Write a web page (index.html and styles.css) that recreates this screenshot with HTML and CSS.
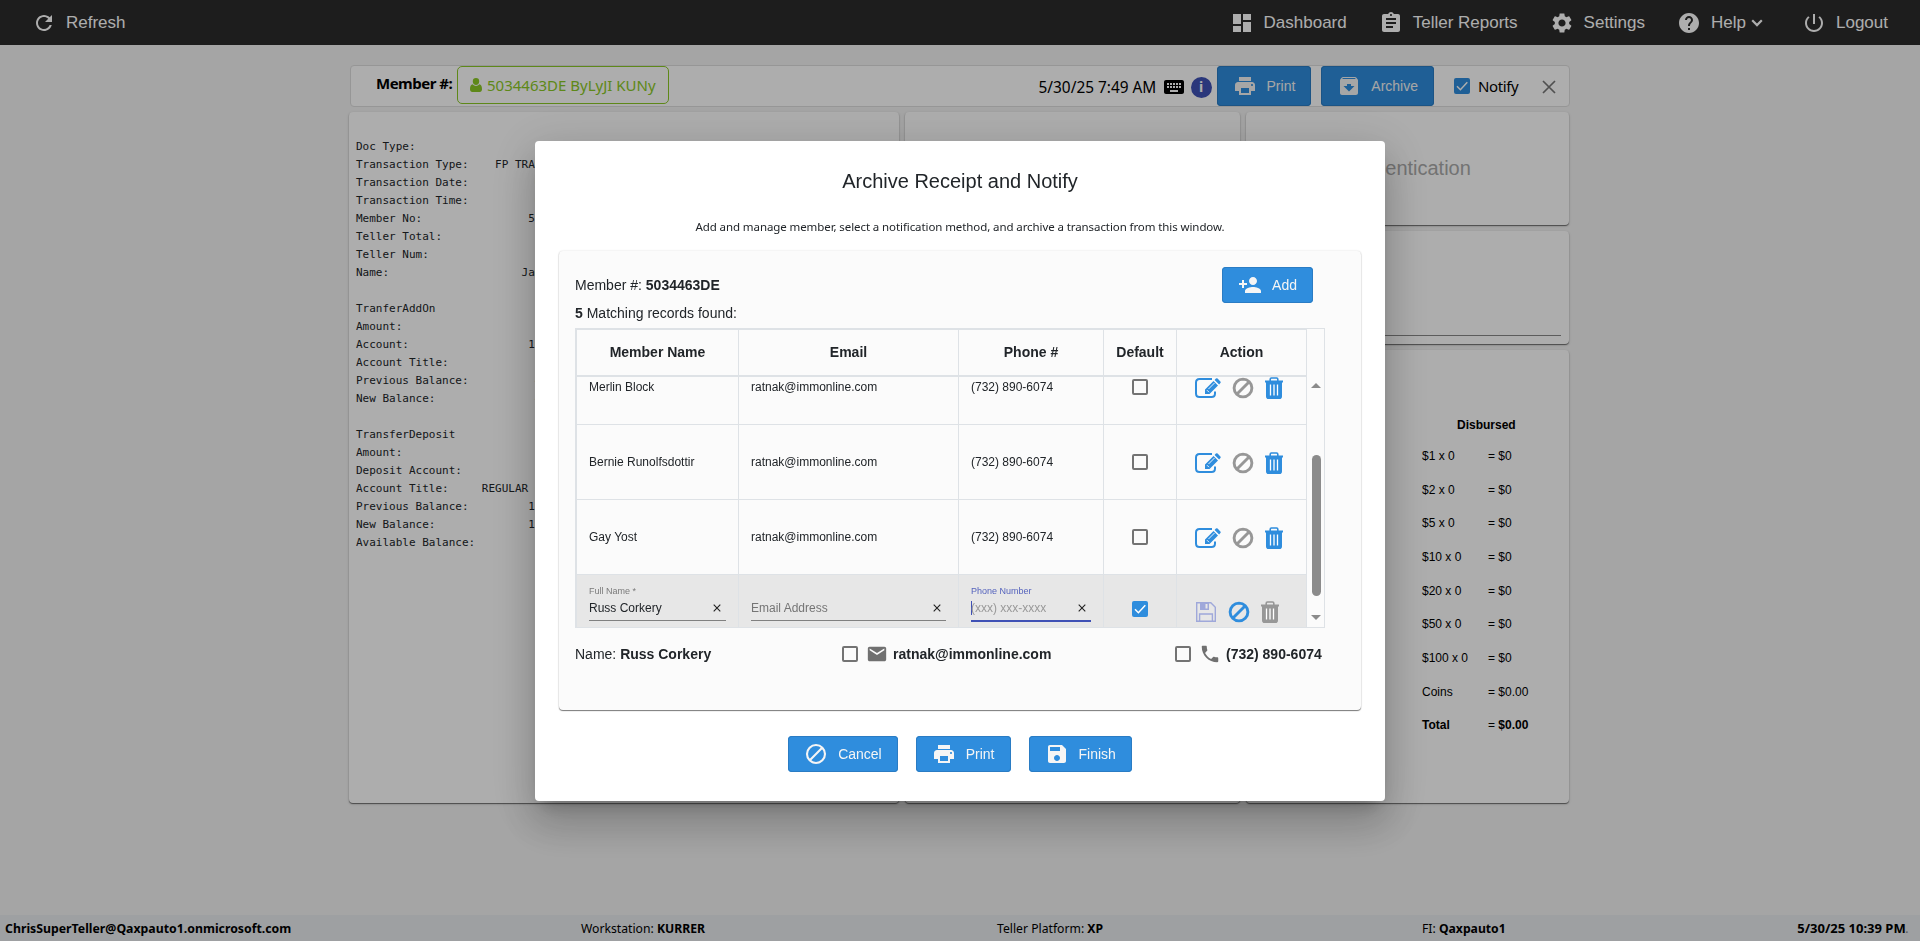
FILE: index.html
```html
<!DOCTYPE html>
<html>

<head>
    <meta charset="utf-8">
    <title>Teller Receipt</title>
    <link rel="stylesheet" href="styles.css">
</head>

<body>
    <!-- icon set -->
    <svg class="sprite" width="0" height="0">
        <symbol id="refresh" viewBox="0 0 24 24"><path d="M17.65 6.35C16.2 4.9 14.21 4 12 4c-4.42 0-7.99 3.58-7.99 8s3.57 8 7.99 8c3.73 0 6.84-2.55 7.73-6h-2.08c-.82 2.33-3.04 4-5.65 4-3.31 0-6-2.69-6-6s2.69-6 6-6c1.66 0 3.14.69 4.22 1.78L13 11h7V4l-2.35 2.35z"/></symbol>
        <symbol id="dashboard" viewBox="0 0 24 24"><path d="M3 13h8V3H3v10zm0 8h8v-6H3v6zm10 0h8V11h-8v10zm0-18v6h8V3h-8z"/></symbol>
        <symbol id="reports" viewBox="0 0 24 24"><path d="M19 3h-4.18C14.4 1.84 13.3 1 12 1c-1.3 0-2.4.84-2.82 2H5c-1.1 0-2 .9-2 2v14c0 1.1.9 2 2 2h14c1.1 0 2-.9 2-2V5c0-1.1-.9-2-2-2zm-7 0c.55 0 1 .45 1 1s-.45 1-1 1-1-.45-1-1 .45-1 1-1zm2 14H7v-2h7v2zm3-4H7v-2h10v2zm0-4H7V7h10v2z"/></symbol>
        <symbol id="settings" viewBox="0 0 24 24"><path d="M19.14 12.94c.04-.3.06-.61.06-.94 0-.32-.02-.64-.07-.94l2.03-1.58c.18-.14.23-.41.12-.61l-1.92-3.32c-.12-.22-.37-.29-.59-.22l-2.39.96c-.5-.38-1.03-.7-1.62-.94l-.36-2.54c-.04-.24-.24-.41-.48-.41h-3.84c-.24 0-.43.17-.47.41l-.36 2.54c-.59.24-1.13.57-1.62.94l-2.39-.96c-.22-.08-.47 0-.59.22L2.74 8.87c-.12.21-.08.47.12.61l2.03 1.58c-.05.3-.09.63-.09.94s.02.64.07.94l-2.03 1.58c-.18.14-.23.41-.12.61l1.92 3.32c.12.22.37.29.59.22l2.39-.96c.5.38 1.03.7 1.62.94l.36 2.54c.05.24.24.41.48.41h3.84c.24 0 .44-.17.47-.41l.36-2.54c.59-.24 1.13-.56 1.62-.94l2.39.96c.22.08.47 0 .59-.22l1.92-3.32c.12-.22.07-.47-.12-.61l-2.01-1.58zM12 15.6c-1.98 0-3.6-1.62-3.6-3.6s1.62-3.6 3.6-3.6 3.6 1.62 3.6 3.6-1.62 3.6-3.6 3.6z"/></symbol>
        <symbol id="help" viewBox="0 0 24 24"><path d="M12 2C6.48 2 2 6.48 2 12s4.48 10 10 10 10-4.48 10-10S17.52 2 12 2zm1 17h-2v-2h2v2zm2.07-7.75l-.9.92C13.45 12.9 13 13.5 13 15h-2v-.5c0-1.1.45-2.1 1.17-2.83l1.24-1.26c.37-.36.59-.86.59-1.41 0-1.1-.9-2-2-2s-2 .9-2 2H8c0-2.21 1.79-4 4-4s4 1.79 4 4c0 .88-.36 1.68-.93 2.25z"/></symbol>
        <symbol id="power" viewBox="0 0 24 24"><path d="M13 3h-2v10h2V3zm4.83 2.17l-1.42 1.42C17.99 7.86 19 9.81 19 12c0 3.87-3.13 7-7 7s-7-3.13-7-7c0-2.19 1.01-4.14 2.58-5.42L6.17 5.17C4.23 6.82 3 9.26 3 12c0 4.97 4.03 9 9 9s9-4.03 9-9c0-2.74-1.23-5.18-3.17-6.83z"/></symbol>
        <symbol id="print" viewBox="0 0 24 24"><path d="M19 8H5c-1.66 0-3 1.34-3 3v6h4v4h12v-4h4v-6c0-1.66-1.34-3-3-3zm-3 11H8v-5h8v5zm3-7c-.55 0-1-.45-1-1s.45-1 1-1 1 .45 1 1-.45 1-1 1zm-1-9H6v4h12V3z"/></symbol>
        <symbol id="archive" viewBox="0 0 24 24"><path d="M20.54 5.23l-1.39-1.68C18.88 3.21 18.47 3 18 3H6c-.47 0-.88.21-1.16.55L3.46 5.23C3.17 5.57 3 6.02 3 6.5V19c0 1.1.9 2 2 2h14c1.1 0 2-.9 2-2V6.5c0-.48-.17-.93-.46-1.27zM12 17.5L6.5 12H10v-2h4v2h3.5L12 17.5zM5.12 5l.81-1h12l.94 1H5.12z"/></symbol>
        <symbol id="keyboard" viewBox="0 0 24 24"><path d="M20 5H4c-1.1 0-1.99.9-1.99 2L2 17c0 1.1.9 2 2 2h16c1.1 0 2-.9 2-2V7c0-1.1-.9-2-2-2zm-9 3h2v2h-2V8zm0 3h2v2h-2v-2zM8 8h2v2H8V8zm0 3h2v2H8v-2zm-1 2H5v-2h2v2zm0-3H5V8h2v2zm9 7H8v-2h8v2zm0-4h-2v-2h2v2zm0-3h-2V8h2v2zm3 3h-2v-2h2v2zm0-3h-2V8h2v2z"/></symbol>
        <symbol id="addperson" viewBox="0 0 24 24"><path d="M15 12c2.21 0 4-1.79 4-4s-1.79-4-4-4-4 1.79-4 4 1.79 4 4 4zm-9-2V7H4v3H1v2h3v3h2v-3h3v-2H6zm9 4c-2.67 0-8 1.34-8 4v2h16v-2c0-2.66-5.33-4-8-4z"/></symbol>
        <symbol id="mail" viewBox="0 0 24 24"><path d="M20 4H4c-1.1 0-1.99.9-1.99 2L2 18c0 1.1.9 2 2 2h16c1.1 0 2-.9 2-2V6c0-1.1-.9-2-2-2zm0 4l-8 5-8-5V6l8 5 8-5v2z"/></symbol>
        <symbol id="phone" viewBox="0 0 24 24"><path d="M6.62 10.79c1.44 2.83 3.76 5.14 6.59 6.59l2.2-2.2c.27-.27.67-.36 1.02-.24 1.12.37 2.33.57 3.57.57.55 0 1 .45 1 1V20c0 .55-.45 1-1 1-9.39 0-17-7.61-17-17 0-.55.45-1 1-1h3.5c.55 0 1 .45 1 1 0 1.25.2 2.45.57 3.57.11.35.03.74-.25 1.02l-2.2 2.2z"/></symbol>
        <symbol id="save" viewBox="0 0 24 24"><path d="M17 3H5c-1.11 0-2 .9-2 2v14c0 1.1.89 2 2 2h14c1.1 0 2-.9 2-2V7l-4-4zm-5 16c-1.66 0-3-1.34-3-3s1.34-3 3-3 3 1.34 3 3-1.34 3-3 3zm3-10H5V5h10v4z"/></symbol>
        <symbol id="block" viewBox="0 0 24 24"><path d="M12 3a9 9 0 1 0 0 18 9 9 0 0 0 0-18zM18.2 5.8L5.8 18.2" fill="none" stroke="currentColor" stroke-width="2.1"/></symbol>
        <symbol id="user" viewBox="0 0 12 14"><path d="M6 0a3.2 3.4 0 0 1 3.2 3.5C9.200 5.500 7.800 7 6 7S2.800 5.500 2.800 3.500A3.200 3.400 0 0 1 6 0zM2.800 6.300C3.600 7.300 4.700 7.900 6 7.900s2.400-.6 3.200-1.600C11.200 6.600 12 8.600 12 11.300 12 12.900 11.100 14 9.700 14H2.300C.9 14 0 12.900 0 11.300 0 8.600.8 6.600 2.800 6.300z"/></symbol>
        <symbol id="ban" viewBox="0 0 22 22"><path d="M11 2.100a8.900 8.900 0 1 0 0 17.800 8.900 8.900 0 0 0 0-17.800zM17 5L5 17" fill="none" stroke="currentColor" stroke-width="2.900"/></symbol>
        <symbol id="edit" viewBox="0 0 28 22">
            <path d="M18 2H5.500Q2 2 2 5.500v11Q2 20 5.500 20h12q3.500 0 3.500-3.500V14.500" fill="none" stroke="currentColor" stroke-width="2"/>
            <path d="M11 12.500L19.500 4l4.500 4.500L15.500 17H11zM20.600 2.900l1.300-1.300q.8-.8 1.700 0l2.800 2.800q.8.8 0 1.600L25.100 7.400z"/>
            <path d="M13 13.200l2 2M14.500 12l6-6" fill="none" stroke="#fff" stroke-width=".9"/>
        </symbol>
        <symbol id="trash" viewBox="0 0 20 22">
            <path d="M6.200 4V2.200Q6.200 1 7.400 1h5.200q1.200 0 1.200 1.200V4" fill="none" stroke="currentColor" stroke-width="1.600"/>
            <path d="M1 3.600h18v2H1zM2 5h16v14.200Q18 22 15.500 22h-11Q2 22 2 19.200z"/>
            <path d="M6.500 7.500v11M10 7.500v11M13.500 7.500v11" fill="none" stroke="#fff" stroke-width="1.300"/>
        </symbol>
        <symbol id="floppy" viewBox="0 0 20 20">
            <path d="M.7.700h14.100l4.500 4.500v14.100H.7zM3.600 19v-7h12.800v7" fill="none" stroke="currentColor" stroke-width="1.400"/>
            <path d="M4 1h9v7H4zM9.500 2v4.500h2V2z" fill-rule="evenodd"/>
        </symbol>
        <symbol id="cross" viewBox="0 0 14 14"><path d="M1 1l12 12M13 1L1 13" fill="none" stroke="currentColor" stroke-width="1.700"/></symbol>
        <symbol id="clear" viewBox="0 0 8 8"><path d="M.7.700l6.600 6.600M7.300.700L.7 7.300" fill="none" stroke="currentColor" stroke-width="1.100"/></symbol>
        <symbol id="chevron" viewBox="0 0 12 8"><path d="M1.200 1.300L6 6.100l4.800-4.800" fill="none" stroke="currentColor" stroke-width="2.200"/></symbol>
        <symbol id="tick" viewBox="0 0 16 16"><path d="M3 8.300l3.400 3.400L13.300 4.300" fill="none" stroke="#fff" stroke-width="1.500"/></symbol>
    </svg>

    <div class="page">
        <div class="topbar">
            <div class="nav-item"><svg class="icon"><use href="#refresh"/></svg>Refresh</div>
            <div class="nav-right">
                <div class="nav-item"><svg class="icon"><use href="#dashboard"/></svg>Dashboard</div>
                <div class="nav-item"><svg class="icon"><use href="#reports"/></svg>Teller Reports</div>
                <div class="nav-item"><svg class="icon"><use href="#settings"/></svg>Settings</div>
                <div class="nav-item nav-help"><svg class="icon"><use href="#help"/></svg>Help<svg class="chevron"><use href="#chevron"/></svg></div>
                <div class="nav-item"><svg class="icon"><use href="#power"/></svg>Logout</div>
            </div>
        </div>

        <div class="member-bar">
            <b class="member-label">Member #:</b>
            <div class="member-btn"><svg class="user"><use href="#user"/></svg><span>5034463DE ByLyJI KUNy</span></div>
            <div class="member-tools">
                <span class="bar-date">5/30/25 7:49 AM</span>
                <svg class="icon keyboard"><use href="#keyboard"/></svg>
                <span class="info">i</span>
                <div class="btn bar-btn"><svg class="icon"><use href="#print"/></svg>Print</div>
                <div class="btn bar-btn"><svg class="icon"><use href="#archive"/></svg>Archive</div>
                <span class="check checked"><svg><use href="#tick"/></svg></span>
                <span class="notify">Notify</span>
                <svg class="close"><use href="#cross"/></svg>
            </div>
        </div>

        <div class="panels">
            <div class="card">
<pre class="receipt">Doc Type:
Transaction Type:    FP TRANSFER
Transaction Date:          05/30/25
Transaction Time:          07:49
Member No:                5034463DE
Teller Total:
Teller Num:
Name:                    James

TranferAddOn
Amount:
Account:                  10
Account Title:
Previous Balance:          4
New Balance:               4

TransferDeposit
Amount:
Deposit Account:
Account Title:     REGULAR CHECKING
Previous Balance:         1
New Balance:              1
Available Balance:</pre>
            </div>
            <div class="card"></div>
            <div class="side">
                <div class="card auth">Authentication</div>
                <div class="card sign"><div class="sign-line"></div></div>
                <div class="card cash">
                    <b class="cash-title">Disbursed</b>
                    <div class="cash-row"><span>$1 x 0</span><span>= $0</span></div>
                    <div class="cash-row"><span>$2 x 0</span><span>= $0</span></div>
                    <div class="cash-row"><span>$5 x 0</span><span>= $0</span></div>
                    <div class="cash-row"><span>$10 x 0</span><span>= $0</span></div>
                    <div class="cash-row"><span>$20 x 0</span><span>= $0</span></div>
                    <div class="cash-row"><span>$50 x 0</span><span>= $0</span></div>
                    <div class="cash-row"><span>$100 x 0</span><span>= $0</span></div>
                    <div class="cash-row"><span>Coins</span><span>= $0.00</span></div>
                    <div class="cash-row"><b>Total</b><span>= <b>$0.00</b></span></div>
                </div>
            </div>
        </div>

        <div class="footer">
            <b class="foot-user">ChrisSuperTeller@Qaxpauto1.onmicrosoft.com</b>
            <span>Workstation: <b>KURRER</b></span>
            <span>Teller Platform: <b>XP</b></span>
            <span>FI: <b>Qaxpauto1</b></span>
            <span class="foot-date"><b>5/30/25 10:39 PM</b><i>.</i></span>
        </div>
    </div>

    <div class="overlay">
        <div class="modal">
            <h2>Archive Receipt and Notify</h2>
            <p class="hint">Add and manage member, select a notification method, and archive a transaction from this window.</p>

            <div class="box">
                <div class="box-head">
                    <div class="lines">
                        <div>Member #: <b>5034463DE</b></div>
                        <div><b>5</b> Matching records found:</div>
                    </div>
                    <div class="btn"><svg class="icon"><use href="#addperson"/></svg>Add</div>
                </div>

                <div class="grid">
                    <div class="grid-table">
                        <div class="row head">
                            <div>Member Name</div>
                            <div>Email</div>
                            <div>Phone #</div>
                            <div>Default</div>
                            <div>Action</div>
                        </div>
                        <div class="rows">
                            <div class="rows-scrolled">
                                <div class="row">
                                    <div>Merlin Block</div>
                                    <div>ratnak@immonline.com</div>
                                    <div>(732) 890-6074</div>
                                    <div class="mid"><span class="check"></span></div>
                                    <div class="actions"><svg class="i-edit"><use href="#edit"/></svg><svg class="i-ban off"><use href="#ban"/></svg><svg class="i-trash"><use href="#trash"/></svg></div>
                                </div>
                                <div class="row">
                                    <div>Bernie Runolfsdottir</div>
                                    <div>ratnak@immonline.com</div>
                                    <div>(732) 890-6074</div>
                                    <div class="mid"><span class="check"></span></div>
                                    <div class="actions"><svg class="i-edit"><use href="#edit"/></svg><svg class="i-ban off"><use href="#ban"/></svg><svg class="i-trash"><use href="#trash"/></svg></div>
                                </div>
                                <div class="row">
                                    <div>Gay Yost</div>
                                    <div>ratnak@immonline.com</div>
                                    <div>(732) 890-6074</div>
                                    <div class="mid"><span class="check"></span></div>
                                    <div class="actions"><svg class="i-edit"><use href="#edit"/></svg><svg class="i-ban off"><use href="#ban"/></svg><svg class="i-trash"><use href="#trash"/></svg></div>
                                </div>
                                <div class="row editing">
                                    <div>
                                        <div class="field">
                                            <label>Full Name *</label>
                                            <div class="value">Russ Corkery<svg class="clear"><use href="#clear"/></svg></div>
                                        </div>
                                    </div>
                                    <div>
                                        <div class="field">
                                            <label></label>
                                            <div class="value empty">Email Address<svg class="clear"><use href="#clear"/></svg></div>
                                        </div>
                                    </div>
                                    <div>
                                        <div class="field focus">
                                            <label>Phone Number</label>
                                            <div class="value"><span class="caret"></span><span class="mask">(xxx) xxx-xxxx</span><svg class="clear"><use href="#clear"/></svg></div>
                                        </div>
                                    </div>
                                    <div class="mid"><span class="check checked"><svg><use href="#tick"/></svg></span></div>
                                    <div class="actions"><svg class="i-save"><use href="#floppy"/></svg><svg class="i-ban"><use href="#ban"/></svg><svg class="i-trash off"><use href="#trash"/></svg></div>
                                </div>
                            </div>
                        </div>
                    </div>
                    <div class="scrollbar">
                        <span class="arrow-up"></span>
                        <span class="thumb"></span>
                        <span class="arrow-down"></span>
                    </div>
                </div>

                <div class="contact">
                    <span class="contact-name">Name: <b>Russ Corkery</b></span>
                    <span class="contact-item mail"><span class="check"></span><svg><use href="#mail"/></svg><b>ratnak@immonline.com</b></span>
                    <span class="contact-item phone"><span class="check"></span><svg><use href="#phone"/></svg><b>(732) 890-6074</b></span>
                </div>
            </div>

            <div class="buttons">
                <div class="btn"><svg class="icon"><use href="#block"/></svg>Cancel</div>
                <div class="btn"><svg class="icon"><use href="#print"/></svg>Print</div>
                <div class="btn"><svg class="icon"><use href="#save"/></svg>Finish</div>
            </div>
        </div>
    </div>
</body>

</html>
```
FILE: styles.css
```css
* {
    box-sizing: border-box;
}
body {
    margin: 0;
    font-family: "Liberation Sans", Arial, sans-serif;
    color: #212529;
    overflow: hidden;
}
svg {
    fill: currentColor;
    display: block;
    flex: none;
}
.sprite {
    position: absolute;
}
.icon {
    width: 24px;
    height: 24px;
}
.page {
    width: 1920px;
    height: 941px;
    background: #f3f3f3;
    display: flex;
    flex-direction: column;
}

/* top bar */
.topbar {
    height: 45px;
    background: #2c2c2c;
    color: #fff;
    display: flex;
    justify-content: space-between;
    padding: 0 32px;
    font-size: 17px;
}
.nav-item {
    display: flex;
    align-items: center;
    gap: 10px;
}
.nav-right {
    display: flex;
    gap: 32px;
}
.nav-help {
    margin-right: 7px;
}
.chevron {
    width: 12px;
    height: 8px;
    margin-left: -5px;
}

/* member bar */
.member-bar {
    width: 1220px;
    height: 42px;
    margin: 20px 0 0 350px;
    border: 1px solid #ddd;
    border-radius: 4px;
    background: #fff;
    color: #000;
    display: flex;
    font-family: "Noto Sans", "Open Sans", sans-serif;
    font-size: 16px;
}
.member-label {
    width: 106px;
    padding: 6px 0 0 25px;
    line-height: 22px;
    white-space: nowrap;
    font-size: 15px;
    letter-spacing: -.5px;
}
.member-btn {
    width: 212px;
    height: 38px;
    border: 1px solid #8bc926;
    border-radius: 5px;
    color: #8bc926;
    display: flex;
    align-items: center;
    padding-left: 12px;
    gap: 5px;
    font-size: 15px;
    white-space: nowrap;
}
.user {
    width: 12px;
    height: 14px;
}
.member-tools {
    margin-left: auto;
    display: flex;
    align-items: center;
    white-space: nowrap;
}
.bar-date {
    width: 123px;
    padding-top: 2px;
    font-size: 15.4px;
}
.keyboard {
    margin: 2px 5px 0 0;
}
.info {
    width: 21px;
    height: 21px;
    border-radius: 50%;
    background: #3f51b5;
    color: #fff;
    font-weight: bold;
    font-size: 14px;
    line-height: 20px;
    text-align: center;
    margin: 2px 5px 0 0;
}
.btn {
    height: 36px;
    padding: 0 16px 0 16px;
    border-radius: 4px;
    box-shadow: inset 0 0 0 1px #2a7cc4;
    background: #2f8ddd;
    color: #f5f5f5;
    display: flex;
    align-items: center;
    gap: 10px;
    font-family: "Liberation Sans", Arial, sans-serif;
    font-size: 14px;
}
.bar-btn {
    height: 40px;
    margin-right: 10px;
}
.check {
    width: 16px;
    height: 16px;
    border: 2px solid #737373;
    border-radius: 2px;
    flex: none;
}
.checked {
    border: 0;
    background: #2f8ddd;
}
.checked svg {
    width: 16px;
    height: 16px;
}
.bar-btn + .check {
    margin: 0 8px 0 10px;
}
.notify {
    width: 64px;
    padding-bottom: 1px;
    font-size: 15px;
    letter-spacing: -.4px;
}
.close {
    width: 14px;
    height: 14px;
    color: #777;
    margin: 2px 13px 0 0;
}

/* background panels */
.panels {
    display: grid;
    grid-template-columns: 550px 335px 323px;
    gap: 6px;
    height: 691px;
    margin: 5px 0 0 349px;
}
.card {
    background: #fff;
    border-radius: 4px;
    box-shadow: 0 1px 1px rgba(0, 0, 0, .5), 0 1px 3px rgba(0, 0, 0, .15);
}
.receipt {
    margin: 26px 0 0 7px;
    font-family: "DejaVu Sans Mono", monospace;
    font-size: 11px;
    line-height: 18px;
}
.side {
    display: grid;
    grid-template-rows: 113px 113px 453px;
    gap: 6px;
}
.auth {
    font-size: 20px;
    color: #aaa;
    display: flex;
    align-items: center;
    justify-content: center;
}
.sign {
    display: flex;
    align-items: flex-end;
    padding: 8px;
}
.sign-line {
    flex: 1;
    border-bottom: 1px solid #888;
}
.cash {
    padding: 67px 0 0 176px;
    font-size: 12px;
    color: #000;
}
.cash-title {
    display: block;
    line-height: 17px;
    margin: 0 0 6px 35px;
}
.cash-row {
    display: grid;
    grid-template-columns: 66px 1fr;
    line-height: 33.65px;
}

/* status bar */
.footer {
    height: 26px;
    margin-top: auto;
    background: #e9ecef;
    color: #000;
    display: grid;
    grid-template-columns: 576px 416px 425px 1fr 1fr;
    padding: 0 11px 0 5px;
    line-height: 27px;
    font-family: "Noto Sans", "Open Sans", sans-serif;
    font-size: 12.2px;
    white-space: nowrap;
}
.foot-user {
    font-size: 12.3px;
}
.foot-date {
    font-size: 13px;
    text-align: right;
}
.foot-date i {
    color: #888;
}

/* dialog */
.overlay {
    position: fixed;
    top: 0;
    left: 0;
    width: 1920px;
    height: 941px;
    background: rgba(0, 0, 0, .32);
    display: flex;
    justify-content: center;
    align-items: flex-start;
    padding-top: 141px;
}
.modal {
    width: 850px;
    height: 660px;
    background: #fff;
    border-radius: 4px;
    padding: 24px;
    box-shadow: 0 11px 15px -7px rgba(0, 0, 0, .2), 0 24px 38px 3px rgba(0, 0, 0, .14), 0 9px 46px 8px rgba(0, 0, 0, .12);
}
.modal h2 {
    margin: 0;
    font-size: 20px;
    font-weight: normal;
    line-height: 32px;
    text-align: center;
}
.hint {
    margin: 21px 0 15px;
    font-family: "Noto Sans", "Open Sans", sans-serif;
    font-size: 11.5px;
    letter-spacing: -.09px;
    line-height: 18px;
    text-align: center;
}
.box {
    height: 459px;
    background: #fbfbfb;
    border-radius: 4px;
    box-shadow: 0 1px 1px rgba(0, 0, 0, .5), 0 0 2px rgba(0, 0, 0, .15);
    padding: 15px 16px;
    font-size: 14px;
}
.box-head {
    height: 62px;
    display: flex;
    justify-content: space-between;
    align-items: flex-start;
    padding: 1px 32px 0 0;
}
.lines {
    padding-top: 4px;
    line-height: 28px;
}
.grid {
    width: 750px;
    height: 300px;
    border: 1px solid #dee2e6;
    display: flex;
    justify-content: space-between;
}
.grid-table {
    width: 731px;
    border: solid #dee2e6;
    border-width: 1px 0 0 1px;
}
.row {
    display: grid;
    grid-template-columns: 162px 220px 145px 73px 130px;
    height: 75px;
    font-size: 12px;
}
.row > div {
    border-right: 1px solid #dee2e6;
    border-bottom: 1px solid #dee2e6;
    padding-left: 12px;
    display: flex;
    align-items: center;
}
.head {
    height: 47px;
}
.row.head > div {
    border-bottom-width: 2px;
    padding: 0 0 2px;
    justify-content: center;
    font-size: 14px;
    font-weight: bold;
}
.rows {
    height: 250px;
    overflow: hidden;
}
.rows-scrolled {
    margin-top: -27px;
}
.row > .mid {
    padding: 0;
    justify-content: center;
}
.row > .actions {
    padding: 1px 0 0 17px;
    color: #2f8ddd;
}
.i-edit {
    width: 28px;
    height: 22px;
    margin-right: 10px;
}
.i-ban {
    width: 22px;
    height: 22px;
    margin-right: 10px;
}
.i-trash {
    width: 20px;
    height: 22px;
}
.i-save {
    width: 20px;
    height: 20px;
    color: #9fa8da;
    margin: 1px 12px 0 2px;
}
.off {
    color: #979797;
}
.editing {
    background: #e7e7e7;
}
.editing > div {
    align-items: flex-start;
}
.row.editing > .mid {
    padding-top: 26px;
}
.row.editing > .actions {
    padding-top: 26px;
}
.field {
    flex: 1;
    margin: 10px 12px 0 0;
    height: 36px;
    border-bottom: 1px solid #808080;
}
.field label {
    display: block;
    height: 12px;
    line-height: 13px;
    font-size: 9px;
    color: #7a7a7a;
}
.focus {
    height: 37px;
    border-bottom: 2px solid #3f51b5;
}
.focus label {
    color: #5563bd;
}
.value {
    display: flex;
    align-items: center;
    height: 22px;
}
.empty {
    color: #757575;
}
.clear {
    width: 8px;
    height: 8px;
    margin: 0 5px 0 auto;
    color: #222;
}
.caret {
    width: 1px;
    height: 14px;
    background: #3f51b5;
    margin-right: -1px;
}
.mask {
    color: #999;
}
.scrollbar {
    width: 17px;
    display: flex;
    flex-direction: column;
    align-items: center;
    padding-left: 1px;
}
.arrow-up {
    margin-top: 54px;
    border: 5px solid transparent;
    border-top: 0;
    border-bottom-color: #8b8b8b;
}
.thumb {
    width: 9px;
    height: 141px;
    margin-top: 67px;
    border-radius: 5px;
    background: #8b8b8b;
}
.arrow-down {
    margin-top: 19px;
    border: 5px solid transparent;
    border-bottom: 0;
    border-top-color: #8b8b8b;
}
.contact {
    display: flex;
    align-items: center;
    height: 20px;
    margin-top: 16px;
    white-space: nowrap;
}
.contact b {
    padding-bottom: 1px;
}
.contact-name {
    width: 267px;
    padding-bottom: 1px;
}
.contact-item {
    display: flex;
    align-items: center;
}
.contact-item svg {
    width: 22px;
    height: 22px;
    color: #707070;
}
.mail {
    width: 333px;
}
.mail svg {
    margin: 0 5px 0 8px;
}
.phone svg {
    margin: 0 5px 0 8px;
}
.buttons {
    display: flex;
    justify-content: center;
    gap: 18px;
    margin-top: 26px;
}
```
